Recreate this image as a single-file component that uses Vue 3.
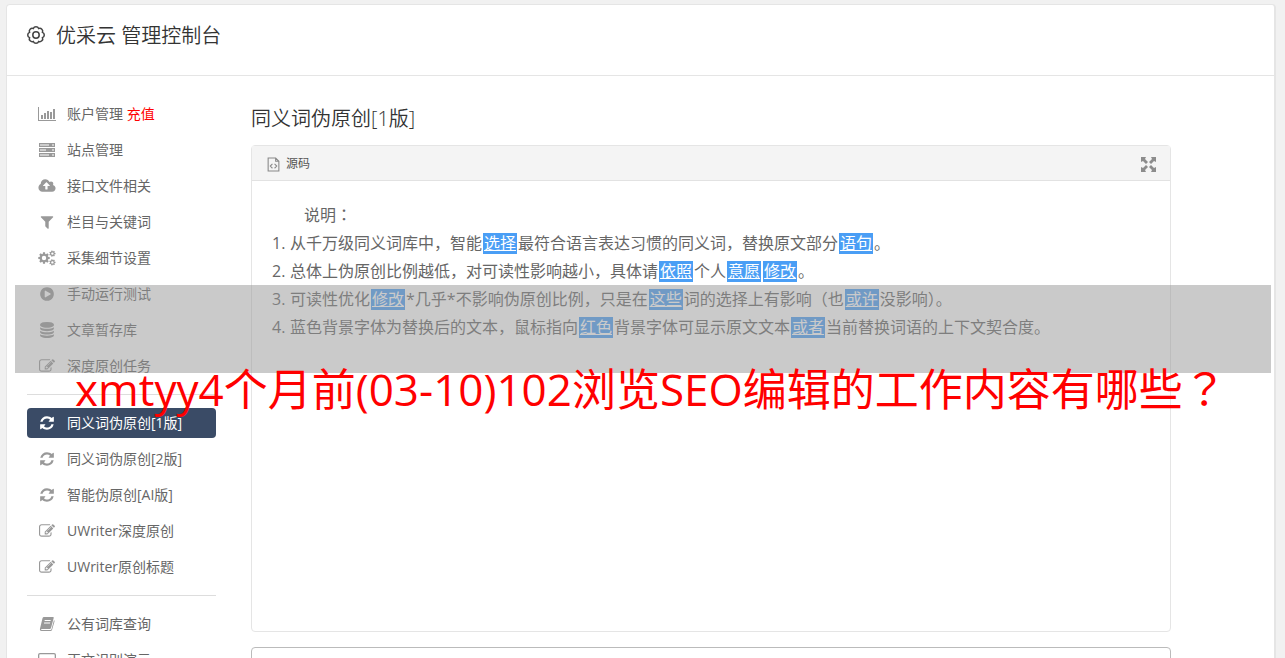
<script setup>
const P = {
  chart: { box: '0 0 18 16', d: 'M0 1h1v13h17v1H0zM3 9h2v4H3zM6 7h2v6H6zM9 5h2v8H9zM12 6h2v7h-2zM15 3h2v10h-2z' },
  server: { box: '0 0 18 16', d: 'M1 1h16v4H1zm1 1.500v1h9v-1zm12 0v1h2v-1zM1 6h16v4H1zm1 1.500v1h6v-1zm12 0v1h2v-1zM1 11h16v4H1zm1 1.500v1h9v-1zm12 0v1h2v-1z' },
  cloud: { box: '-64 0 1920 1792', d: 'M1216 864q0-14-9-23l-352-352q-9-9-23-9t-23 9l-351 351q-10 12-10 24 0 14 9 23t23 9h224v352q0 13 9.500 22.500t22.500 9.500h192q13 0 22.500-9.500t9.500-22.500v-352h224q13 0 22.500-9.500t9.500-22.500zm640 288q0 159-112.500 271.500t-271.500 112.500h-1088q-185 0-316.500-131.500t-131.500-316.500q0-130 70-240t188-165q-2-30-2-43 0-212 150-362t362-150q156 0 285.500 87t188.500 231q71-62 166-62 106 0 181 75t75 181q0 76-41 138 130 31 213.500 135.500t83.500 238.500z' },
  filter: { box: '0 0 1792 1792', d: 'M1595 295q17 41-14 70l-493 493v742q0 42-39 59-13 5-25 5-27 0-45-19l-256-256q-19-19-19-45v-486l-493-493q-31-29-14-70 17-39 59-39h1280q42 0 59 39z' },
  cogs: { box: '0 0 18 16', d: gear(6, 8, 5.8, 4.300, 2.200, 8) + gear(14.400, 3.600, 3.200, 2.300, 1.200, 7) + gear(14.400, 12.400, 3.200, 2.300, 1.200, 7) },
  play: { box: '0 0 1792 1792', d: 'M896 128q209 0 385.500 103t279.500 279.500 103 385.500-103 385.500-279.500 279.500-385.500 103-385.500-103-279.500-279.500-103-385.500 103-385.500 279.500-279.500 385.500-103zm384 823q32-18 32-55t-32-55l-544-320q-31-19-64-1-32 19-32 56v640q0 37 32 56 16 8 32 8 17 0 32-9z' },
  database: { box: '0 0 1792 1792', d: 'M896 768q237 0 443-43t325-127v170q0 69-103 128t-280 93.500-385 34.500-385-34.500-280-93.500-103-128v-170q119 84 325 127t443 43zm0 768q237 0 443-43t325-127v170q0 69-103 128t-280 93.500-385 34.500-385-34.500-280-93.500-103-128v-170q119 84 325 127t443 43zm0-384q237 0 443-43t325-127v170q0 69-103 128t-280 93.500-385 34.500-385-34.500-280-93.500-103-128v-170q119 84 325 127t443 43zm0-1152q208 0 385 34.500t280 93.500 103 128v128q0 69-103 128t-280 93.500-385 34.500-385-34.500-280-93.500-103-128v-128q0-69 103-128t280-93.500 385-34.500z' },
  edit: { box: '0 0 1792 1792', d: 'M888 1184l116-116-152-152-116 116v56h96v96h56zm440-720q-16-16-33 1l-350 350q-17 17-1 33t33-1l350-350q17-17 1-33zm80 594v190q0 119-84.500 203.500t-203.500 84.500h-832q-119 0-203.500-84.500t-84.500-203.500v-832q0-119 84.500-203.500t203.500-84.500h832q63 0 117 25 15 7 18 23 3 17-9 29l-49 49q-14 14-32 8-23-6-45-6h-832q-66 0-113 47t-47 113v832q0 66 47 113t113 47h832q66 0 113-47t47-113v-126q0-13 9-22l64-64q15-15 35-7t20 29zm-96-738l288 288-672 672h-288v-288zm444 132l-92 92-288-288 92-92q28-28 68-28t68 28l152 152q28 28 28 68t-28 68z' },
  refresh: { box: '0 0 1792 1792', d: 'M1639 1056q0 5-1 7-64 268-268 434.500t-478 166.500q-146 0-282.500-55t-243.500-157l-129 129q-19 19-45 19t-45-19-19-45v-448q0-26 19-45t45-19h448q26 0 45 19t19 45-19 45l-137 137q71 66 161 102t187 36q134 0 250-65t186-179q11-17 53-117 8-23 30-23h192q13 0 22.500 9.500t9.500 22.500zm25-800v448q0 26-19 45t-45 19h-448q-26 0-45-19t-19-45 19-45l138-138q-148-137-349-137-134 0-250 65t-186 179q-11 17-53 117-8 23-30 23h-199q-13 0-22.500-9.500t-9.500-22.500v-7q65-268 270-434.500t480-166.500q146 0 284 55.500t245 156.500l130-129q19-19 45-19t45 19 19 45z' },
  book: { box: '0 0 16 16', d: 'M5 1h9q1 0 .7 1L12 12q-.3 1-1.300 1H3q-1 0-1 .5t1 .5h8.500q.8 0 1-.8L15 4q.8.500.5 1.500L13 14q-.4 1-1.500 1H2.500Q.5 15 1 12.500L3.500 2.200Q3.800 1 5 1zm.8 3-.3 1h6l.3-1zm-.6 2.500-.3 1h6l.3-1z' },
  laptop: { box: '0 0 18 16', d: 'M2 1h14q2 0 2 2v9q0 2-2 2H2q-2 0-2-2V3q0-2 2-2zm0 1.300q-.7 0-.7.700v8.500h15.400V3q0-.7-.7-.7z' },
}

function gear(cx, cy, outer, inner, hole, teeth) {
  const pts = []
  for (let i = 0; i < teeth; i++) {
    const a = (i * 2 * Math.PI) / teeth
    const s = Math.PI / teeth
    for (const [k, r] of [[-0.75, inner], [-0.45, outer], [0.45, outer], [0.75, inner]]) {
      pts.push(`${(cx + r * Math.cos(a + k * s)).toFixed(2)} ${(cy + r * Math.sin(a + k * s)).toFixed(2)}`)
    }
  }
  return `M${pts.join('L')}zM${cx - hole} ${cy}a${hole} ${hole} 0 1 0 ${2 * hole} 0a${hole} ${hole} 0 1 0 ${-2 * hole} 0z`
}

function scallop(c, r, bumps) {
  const p = (i) => {
    const a = ((i + 0.5) * 2 * Math.PI) / bumps
    return `${(c + r * Math.cos(a)).toFixed(2)} ${(c + r * Math.sin(a)).toFixed(2)}`
  }
  let d = `M${p(0)}`
  for (let i = 1; i <= bumps; i++) d += `A2.900 2.900 0 0 1 ${p(i)}`
  return d + 'z'
}
const cogOutline = scallop(10, 7, 8)

const groups = [
  [
    { icon: 'chart', text: '账户管理', extra: '充值' },
    { icon: 'server', text: '站点管理' },
    { icon: 'cloud', text: '接口文件相关' },
    { icon: 'filter', text: '栏目与关键词' },
    { icon: 'cogs', text: '采集细节设置' },
    { icon: 'play', text: '手动运行测试' },
    { icon: 'database', text: '文章暂存库' },
    { icon: 'edit', text: '深度原创任务' },
  ],
  [
    { icon: 'refresh', text: '同义词伪原创[1版]', active: true },
    { icon: 'refresh', text: '同义词伪原创[2版]' },
    { icon: 'refresh', text: '智能伪原创[AI版]' },
    { icon: 'edit', text: 'UWriter深度原创' },
    { icon: 'edit', text: 'UWriter原创标题' },
  ],
  [
    { icon: 'book', text: '公有词库查询' },
    { icon: 'laptop', text: '正文识别演示' },
  ],
]

// Odd entries of each line are replaced words.
const lines = [
  ['从千万级同义词库中，智能', '选择', '最符合语言表达习惯的同义词，替换原文部分', '语句', '。'],
  ['总体上伪原创比例越低，对可读性影响越小，具体请', '依照', '个人', '意愿', '', '修改', '。'],
  ['可读性优化', '修改', '*几乎*不影响伪原创比例，只是在', '这些', '词的选择上有影响（也', '或许', '没影响）。'],
  ['蓝色背景字体为替换后的文本，鼠标指向', '红色', '背景字体可显示原文文本', '或者', '当前替换词语的上下文契合度。'],
]
</script>

<template>
  <div class="page">
    <div class="card">
      <header class="top">
        <svg class="cog" viewBox="0 0 20 20" aria-hidden="true">
          <path :d="cogOutline" />
          <circle cx="10" cy="10" r="3.200" />
        </svg>
        <h1>优采云 管理控制台</h1>
      </header>
      <div class="body">
        <nav class="side">
          <ul v-for="(g, i) in groups" :key="i">
            <li v-for="item in g" :key="item.text">
              <a href="#" :class="{ active: item.active }">
                <svg class="ico" :viewBox="P[item.icon].box" aria-hidden="true">
                  <path fill-rule="evenodd" :d="P[item.icon].d" />
                </svg>
                <span>{{ item.text }} <em v-if="item.extra">{{ item.extra }}</em></span>
              </a>
            </li>
          </ul>
        </nav>
        <main class="main">
          <h2>同义词伪原创[1版]</h2>
          <section class="editor">
            <div class="bar">
              <button type="button" class="source">
                <svg viewBox="0 0 12 14" aria-hidden="true">
                  <path d="M1 1h7l3 3v9H1zM8 1v3h3M5 6.500 3 8.500l2 2M7 6.500l2 2-2 2" />
                </svg>
                源码
              </button>
              <button type="button" class="full" aria-label="全屏">
                <svg viewBox="0 0 15 15" aria-hidden="true">
                  <path d="M0 0h5L4 2l3 3-2 2-3-3-2 1zM15 0v5l-2-1-3 3-2-2 3-3-1-2zM0 15v-5l2 1 3-3 2 2-3 3 1 2zM15 15h-5l1-2-3-3 2-2 3 3 2-1z" />
                </svg>
              </button>
            </div>
            <div class="doc">
              <p>说明<span class="mid">：</span></p>
              <p v-for="(line, i) in lines" :key="i" class="item"><span class="num">{{ i + 1 }}.</span><span><template v-for="(t, j) in line" :key="j"><u v-if="j % 2">{{ t }}</u><template v-else>{{ t }}</template></template></span></p>
            </div>
          </section>
          <textarea class="next" aria-label="结果"></textarea>
        </main>
      </div>
    </div>
    <div class="veil"></div>
    <p class="banner">xmtyy4个月前(03-10)102浏览SEO编辑的工作内容有哪些<span class="mid">？</span></p>
  </div>
</template>

<style>
body {
  background: #f1f1f1;
}
</style>

<style scoped>
.page {
  position: relative;
  box-sizing: border-box;
  height: 100vh;
  overflow: hidden;
  padding: 4px 9px 0 6px;
  background: #f1f1f1;
  color: #666;
  font-family: "Open Sans", "Noto Sans CJK SC", sans-serif;
  font-size: 14px;
}
.card {
  min-height: 100vh;
  background: #fff;
  border: 1px solid #e5e5e5;
  border-right-width: 2px;
  border-radius: 4px;
}
.top {
  display: flex;
  gap: 10px;
  height: 70px;
  padding-left: 19px;
  border-bottom: 1px solid #e5e5e5;
}
.cog {
  width: 20px;
  height: 20px;
  margin-top: 20px;
  fill: none;
  stroke: #444;
  stroke-width: 1.5;
}
h1, h2 {
  margin: 0;
  color: #333;
  font-size: 20px;
  font-weight: 350;
  line-height: 30px;
}
h1 {
  margin-top: 16px;
}
.body {
  display: flex;
  gap: 35px;
  padding: 23px 103px 0 20px;
}
.side {
  flex: 0 0 189px;
}
ul {
  display: flex;
  flex-direction: column;
  gap: 6px;
  margin: 0;
  padding: 0;
  list-style: none;
}
ul + ul {
  margin-top: 13px;
  padding-top: 13px;
  border-top: 1px solid #ddd;
}
.side a {
  display: flex;
  align-items: center;
  gap: 11px;
  height: 30px;
  padding-left: 11px;
  border-radius: 4px;
  color: #666;
  line-height: 30px;
  text-decoration: none;
}
.side em {
  color: #f00;
  font-style: normal;
}
.ico {
  width: 18px;
  height: 16px;
  fill: #999;
}
.side .active {
  background: #3a4b66;
  color: #fff;
}
.active .ico {
  fill: #fff;
}
.main {
  flex: 1;
  min-width: 0;
}
h2 {
  margin: 5px 0 11px;
}
.editor {
  display: flex;
  flex-direction: column;
  box-sizing: border-box;
  min-height: 487px;
  border: 1px solid #e5e5e5;
  border-radius: 4px;
}
.bar {
  display: flex;
  align-items: center;
  justify-content: space-between;
  height: 34px;
  padding: 0 14px 0 15px;
  background: #f4f4f4;
  border-bottom: 1px solid #e2e2e2;
}
button {
  display: flex;
  align-items: center;
  gap: 6px;
  padding: 0;
  border: 0;
  background: none;
  color: #555;
  font: inherit;
  font-size: 12px;
}
.source svg {
  width: 13px;
  height: 15px;
  margin-top: 3px;
  fill: none;
  stroke: #888;
  stroke-width: 1;
}
.full svg {
  width: 15px;
  height: 15px;
  margin-top: 3px;
  fill: #8c8c8c;
}
.doc {
  padding: 20px;
  font-size: 16px;
  line-height: 28px;
}
.doc p {
  margin: 0;
  padding-left: 32px;
}
.doc .item {
  display: flex;
  padding-left: 0;
}
.num {
  flex: 0 0 18px;
}
.doc u {
  margin: 0 1px;
  padding: 0 1px;
  background: linear-gradient(#4a9ef5, #4a9ef5) center / 100% 21px no-repeat;
  color: #fff;
}
.mid {
  font-family: "Noto Sans CJK TC", sans-serif;
  line-height: 1;
}
.next {
  display: block;
  box-sizing: border-box;
  width: 100%;
  height: 120px;
  margin-top: 15px;
  border: 1px solid #bbb;
  border-radius: 4px;
  resize: none;
}
.veil {
  position: absolute;
  top: 285px;
  left: 15px;
  right: 14px;
  height: 88px;
  background: rgba(150, 150, 150, 0.5);
}
.banner {
  position: absolute;
  top: 359px;
  left: 75px;
  margin: 0;
  color: #f00;
  font-size: 44px;
  line-height: 60px;
  white-space: nowrap;
}
</style>
